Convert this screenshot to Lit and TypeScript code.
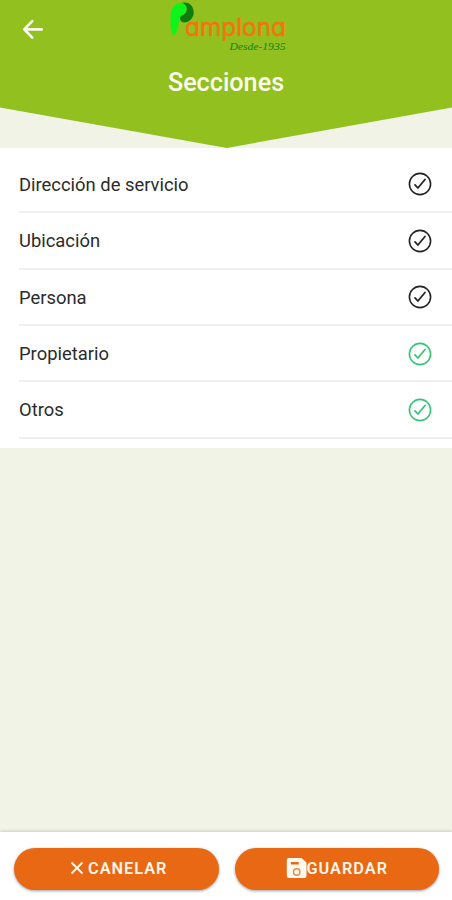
import { LitElement, html, css, svg } from "lit";
import { customElement } from "lit/decorators.js";

interface Section {
  label: string;
  done: boolean;
}

const SECTIONS: Section[] = [
  { label: "Dirección de servicio", done: false },
  { label: "Ubicación", done: false },
  { label: "Persona", done: false },
  { label: "Propietario", done: true },
  { label: "Otros", done: true },
];

const checkIcon = html`<svg class="check" viewBox="0 0 24 24" fill="none" stroke="currentColor" stroke-linecap="round" stroke-linejoin="round">
  ${svg`<circle cx="12" cy="12" r="10.6" stroke-width="1.6"/><path d="M7 12.900L9.900 16L17 7.500" stroke-width="1.800"/>`}
</svg>`;

@customElement("app-root")
export class AppRoot extends LitElement {
  static styles = css`
    :host {
      display: flex;
      flex-direction: column;
      height: 900px;
      width: 452px;
      overflow: hidden;
      background: #f0f3e6;
      font-family: Roboto, "Liberation Sans", sans-serif;
    }
    .header {
      position: relative;
      height: 148px;
      flex: none;
      box-sizing: border-box;
      background: #92c01f;
      clip-path: polygon(0 0, 100% 0, 100% 107.5px, 50.2% 100%, 0 107.5px);
      display: grid;
      grid-template-columns: 1fr 130px 1fr;
      grid-template-rows: 60px 43px;
    }
    .back {
      width: 22px;
      height: 22px;
      margin: 18px 0 0 22px;
    }
    .logo {
      width: 130px;
      height: 60px;
      overflow: visible;
    }
    .brand {
      font-family: Inter, "Open Sans", sans-serif;
      font-size: 24.5px;
      font-feature-settings: "cv11" 1;
      fill: #f2740e;
      stroke: #f2740e;
      stroke-width: 0.5px;
    }
    .since {
      font-family: "Liberation Serif", serif;
      font-style: italic;
      font-size: 11px;
      fill: #118418;
    }
    .title {
      grid-column: 1 / -1;
      margin: 0;
      padding-top: 1px;
      text-align: center;
      font-size: 25.2px;
      font-weight: 500;
      line-height: 43px;
      color: #fbfef0;
    }
    .list {
      margin: 0;
      padding: 9px 0 9.500px;
      list-style: none;
      background: #fff;
    }
    .row {
      display: flex;
      align-items: center;
      justify-content: space-between;
      height: 56.35px;
      box-sizing: border-box;
      margin-left: 19px;
      padding: 0.6px 20px 0 0;
      border-bottom: 2px solid #efefef;
      font-size: 18.4px;
      color: #2b2b2b;
    }
    .check {
      width: 24px;
      height: 24px;
      color: #242424;
    }
    .done .check {
      color: #36c578;
    }
    .footer {
      margin-top: auto;
      height: 68px;
      box-sizing: border-box;
      padding: 16px 13px 0 14px;
      display: grid;
      grid-template-columns: 1fr 1fr;
      gap: 16px;
      background: #fff;
      box-shadow: 0 -1px 3px rgba(0, 0, 0, 0.15);
    }
    .button {
      display: flex;
      align-items: center;
      justify-content: center;
      height: 42px;
      border: 0;
      padding: 0 0 2px;
      border-radius: 21px;
      background: #e96813;
      box-shadow: 0 1px 3px rgba(0, 0, 0, 0.4);
      color: #fff6ea;
      font: 600 16.3px Roboto, "Liberation Sans", sans-serif;
      letter-spacing: 1px;
    }
    .close {
      width: 14px;
      height: 14px;
      margin: 0 4px 0 5px;
    }
    .save {
      width: 21px;
      height: 22px;
    }
  `;

  render() {
    return html`
      <header class="header">
        <svg class="back" viewBox="0 0 22 22" fill="none" stroke="#fbfff0" stroke-width="2.600" stroke-linecap="round" stroke-linejoin="round">
          <path d="M10.3 3.2L2.2 11.4L10.3 19.6M2.4 11.4H19.7" />
        </svg>
        <svg class="logo" viewBox="161 0 130 60">
          <path fill="#0bf51a" d="M180.500 3C174 3.500 170.500 9 170.500 17C170.500 24 170.300 32 173.500 35.500C176.500 34 178 28 178.800 22.500C179.500 18 181 15 184.500 13C187.500 10.500 187.500 5 184 3.300C183 2.900 181.800 2.900 180.500 3Z" />
          <path fill="#0d7d10" d="M182 2.800C190 1.500 193.700 7 193.700 12.500C193.500 18.500 189 22.500 184 22.500C181 22.300 179.700 20 180 17.500C181 15.500 182.500 15.500 184.500 14C188 11.500 187.800 5 182 2.800Z" />
          <text class="brand" x="185" y="35.500" textLength="101" lengthAdjust="spacingAndGlyphs">amplona</text>
          <text class="since" x="229.500" y="49.500" textLength="56" lengthAdjust="spacingAndGlyphs">Desde-1935</text>
        </svg>
        <h1 class="title">Secciones</h1>
      </header>
      <ul class="list">
        ${SECTIONS.map(
          (s) => html`<li class="row ${s.done ? "done" : ""}"><span>${s.label}</span>${checkIcon}</li>`
        )}
      </ul>
      <footer class="footer">
        <button class="button">
          <svg class="close" viewBox="0 0 14 14" fill="none" stroke="currentColor" stroke-width="2">
            <path d="M1.500 1.500L12.500 12.500M12.500 1.500L1.500 12.500" />
          </svg>
          CANELAR
        </button>
        <button class="button">
          <svg class="save" viewBox="0 0 21 22">
            <path fill="#fff9f0" fill-rule="evenodd" d="M3 1H15.500L20.500 5.500V18.500Q20.500 21 18 21H3Q.8 21 .8 18.500V3.300Q.8 1 3 1ZM4.800 5V7.400H12.700V5Z" />
            <circle cx="10.700" cy="15" r="3.200" fill="none" stroke="#e58a4c" stroke-width="1.400" />
          </svg>GUARDAR
        </button>
      </footer>
    `;
  }
}
